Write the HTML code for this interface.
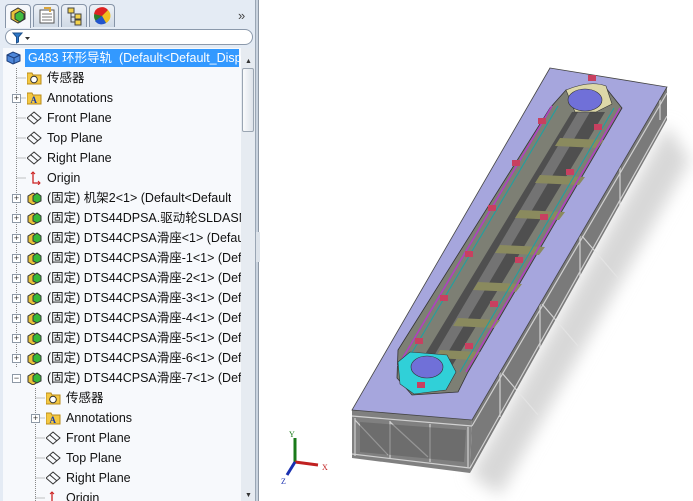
<!DOCTYPE html>
<html><head><meta charset="utf-8"><style>
*{margin:0;padding:0;box-sizing:border-box}
body{width:693px;height:501px;overflow:hidden;background:#fff;font-family:"Liberation Sans","Noto Sans CJK SC",sans-serif;position:relative}
#panel{position:absolute;left:0;top:0;width:256px;height:501px;background:#e4ebf4;border-right:1px solid #9aa6b4}
#sep{position:absolute;left:256px;top:0;width:3px;height:501px;background:#c9d3df;border-right:1px solid #8d98a6}
.tab{position:absolute;top:4px;width:26px;height:23px;border:1px solid #8795a8;border-bottom:none;border-radius:4px 4px 0 0;background:linear-gradient(#eef2f7,#cfd9e5)}
#filter{position:absolute;left:5px;top:29px;width:248px;height:16px;border:1px solid #8b99ab;border-radius:8px;background:#fff}
#tree{position:absolute;left:3px;top:48px;width:238px;height:453px;background:#f7f9fc}
#sb{position:absolute;left:241px;top:48px;width:14px;height:453px;background:#e6ebf1}
.r{position:absolute;height:20px;line-height:20px;font-size:12.5px;color:#111;white-space:nowrap;overflow:hidden}
.pm{position:absolute;width:9px;height:9px;border:1px solid #8e99a6;background:#fff;font-size:9px;line-height:7px;text-align:center;color:#333}
.ic{position:absolute;width:15px;height:14px}
</style></head><body>
<div id="panel">
<div class="tab" style="left:5px;background:#f6f8fb;height:24px"></div>
<div class="tab" style="left:33px"></div>
<div class="tab" style="left:61px"></div>
<div class="tab" style="left:89px"></div>
<svg style="position:absolute;left:0;top:0" width="256" height="30">
<path d="M11 12l7-4 7 4v7l-7 4-7-4z" fill="#e8c23a" stroke="#333"/><path d="M15 14l5-3 4 3v5l-4 3-5-3z" fill="#3fbb3f" stroke="#333"/>
<rect x="40" y="10" width="14" height="13" fill="#fff" stroke="#555"/><path d="M42 14h10M42 17h10M42 20h10" stroke="#777"/><path d="M44 8l6 0 0 4" stroke="#d9a53a" fill="none" stroke-width="2"/>
<rect x="68" y="8" width="6" height="5" fill="#f3d24a" stroke="#444"/><rect x="75" y="14" width="6" height="5" fill="#f3d24a" stroke="#444"/><rect x="75" y="20" width="6" height="5" fill="#f3d24a" stroke="#444"/><path d="M71 13v9h4M71 17h4" stroke="#444" fill="none"/>
<circle cx="102" cy="16" r="8" fill="#2a7d2a"/><path d="M102 16L94 14A8 8 0 0 1 108 10z" fill="#d22"/><path d="M102 16L108 10A8 8 0 0 1 106 23z" fill="#f0c020"/><path d="M102 16L106 23A8 8 0 0 1 95 21z" fill="#2255cc"/>
<text x="238" y="20" font-size="13" fill="#444" font-family="Liberation Sans">»</text>
</svg>
<div id="filter"><svg width="30" height="16"><path d="M7 3h9l-3.5 4v5l-2 1v-6z" fill="#2e78c8" stroke="#1b4f8c"/><path d="M19 7h5l-2.5 3z" fill="#333"/></svg></div>
<div id="tree"></div>
<div id="sb">
<div style="position:absolute;left:1px;top:20px;width:12px;height:64px;background:linear-gradient(90deg,#fafbfc,#dde3ea);border:1px solid #9aa5b2;border-radius:2px"></div>
<div style="position:absolute;left:4px;top:10px;font-size:7px;color:#333">▲</div>
<div style="position:absolute;left:4px;top:444px;font-size:7px;color:#333">▼</div>
</div>
</div>
<div id="sep"><div style="position:absolute;left:0;top:232px;width:4px;height:30px;background:#dde3ea"></div></div>

<div style="position:absolute;left:3px;top:48px;width:238px;height:453px;overflow:hidden">
<svg style="position:absolute;left:0;top:0" width="238" height="453">
<g stroke="#888" stroke-dasharray="1,1" fill="none">
<path d="M13.5 20v300M13.5 30h10M13.5 50h10M13.5 70h10M13.5 90h10M13.5 110h10M13.5 130h10"/>
<path d="M32.5 340v120M32.5 350h10M32.5 370h10M32.5 390h10M32.5 410h10M32.5 430h10M32.5 450h10"/>
</g>
</svg>
<div style="position:absolute;left:22px;top:1px;width:214px;height:18px;background:#3399ff"></div>
<div class="r" style="left:25px;top:0;color:#fff">G483 环形导轨&nbsp; (Default&lt;Default_Disp</div>
<svg class="ic" style="left:3px;top:3px" viewBox="0 0 15 14"><path d="M1 4l6-3 7 3v6l-7 3-6-3z" fill="#4d86d8" stroke="#1b3d7a"/><path d="M1 4l7 3 6-3M8 7v6" stroke="#1b3d7a" fill="none"/></svg>
</div>

<div id="rows" style="position:absolute;left:3px;top:48px;width:238px;height:453px;overflow:hidden">
<svg class="ic" style="left:24px;top:23px" viewBox="0 0 15 14"><path d="M0 2h5l1 2h8v9H0z" fill="#f4c842" stroke="#b88a1a"/><circle cx="7" cy="8.5" r="3.3" fill="#fff" stroke="#333"/></svg>
<div class="r" style="left:44px;top:20px">传感器</div>
<div class="pm" style="left:9px;top:46px">+</div>
<svg class="ic" style="left:24px;top:43px" viewBox="0 0 15 14"><path d="M0 2h5l1 2h8v9H0z" fill="#f4c842" stroke="#b88a1a"/><text x="3.5" y="12" font-size="9" font-weight="bold" fill="#1a3ea8" font-family="Liberation Serif">A</text></svg>
<div class="r" style="left:44px;top:40px">Annotations</div>
<svg class="ic" style="left:24px;top:63px" viewBox="0 0 15 14"><path d="M7 1l7 6-7 6-7-6z M4 4l7 6" fill="none" stroke="#333"/></svg>
<div class="r" style="left:44px;top:60px">Front Plane</div>
<svg class="ic" style="left:24px;top:83px" viewBox="0 0 15 14"><path d="M7 1l7 6-7 6-7-6z M4 4l7 6" fill="none" stroke="#333"/></svg>
<div class="r" style="left:44px;top:80px">Top Plane</div>
<svg class="ic" style="left:24px;top:103px" viewBox="0 0 15 14"><path d="M7 1l7 6-7 6-7-6z M4 4l7 6" fill="none" stroke="#333"/></svg>
<div class="r" style="left:44px;top:100px">Right Plane</div>
<svg class="ic" style="left:24px;top:123px" viewBox="0 0 15 14"><path d="M6 1v11h7" fill="none" stroke="#c22" stroke-width="1.3"/><path d="M4 3l2-2 2 2M11 10l2 2-2 2" fill="none" stroke="#c22"/></svg>
<div class="r" style="left:44px;top:120px">Origin</div>
</div>

<div id="comps" style="position:absolute;left:3px;top:48px;width:238px;height:453px;overflow:hidden"></div>
<script>
var names=["(固定) 机架2&lt;1&gt; (Default&lt;Default","(固定) DTS44DPSA.驱动轮SLDASM","(固定) DTS44CPSA滑座&lt;1&gt; (Defau","(固定) DTS44CPSA滑座-1&lt;1&gt; (Def","(固定) DTS44CPSA滑座-2&lt;1&gt; (Def","(固定) DTS44CPSA滑座-3&lt;1&gt; (Def","(固定) DTS44CPSA滑座-4&lt;1&gt; (Def","(固定) DTS44CPSA滑座-5&lt;1&gt; (Def","(固定) DTS44CPSA滑座-6&lt;1&gt; (Def","(固定) DTS44CPSA滑座-7&lt;1&gt; (Def"];
var h="";
names.forEach(function(n,i){var t=140+i*20;
h+='<div class="pm" style="left:9px;top:'+(t+6)+'px">'+(i==9?'−':'+')+'</div>';
h+='<svg class="ic" style="left:24px;top:'+(t+3)+'px" viewBox="0 0 15 14"><path d="M1 5l5-3 5 3v6l-5 3-5-3z" fill="#e8c23a" stroke="#333"/><path d="M6 5l4-3 4 3v5l-4 2-4-2z" fill="#37b837" stroke="#333"/></svg>';
h+='<div class="r" style="left:44px;top:'+t+'px">'+n+'</div>';});
var sub=[["s","传感器"],["a","Annotations"],["p","Front Plane"],["p","Top Plane"],["p","Right Plane"],["o","Origin"]];
sub.forEach(function(s,i){var t=340+i*20,ic;
if(s[0]=="s")ic='<path d="M0 2h5l1 2h8v9H0z" fill="#f4c842" stroke="#b88a1a"/><circle cx="7" cy="8.5" r="3.3" fill="#fff" stroke="#333"/>';
else if(s[0]=="a"){ic='<path d="M0 2h5l1 2h8v9H0z" fill="#f4c842" stroke="#b88a1a"/><text x="3.5" y="12" font-size="9" font-weight="bold" fill="#1a3ea8" font-family="Liberation Serif">A</text>';h+='<div class="pm" style="left:28px;top:'+(t+6)+'px">+</div>';}
else if(s[0]=="p")ic='<path d="M7 1l7 6-7 6-7-6z M4 4l7 6" fill="none" stroke="#333"/>';
else ic='<path d="M6 1v11h7" fill="none" stroke="#c22" stroke-width="1.3"/><path d="M4 3l2-2 2 2" fill="none" stroke="#c22"/>';
h+='<svg class="ic" style="left:43px;top:'+(t+3)+'px" viewBox="0 0 15 14">'+ic+'</svg><div class="r" style="left:63px;top:'+t+'px">'+s[1]+'</div>';});
document.getElementById("comps").innerHTML=h;
</script>

<svg style="position:absolute;left:260px;top:0" width="433" height="501" viewBox="260 0 433 501">
<defs>
<linearGradient id="sh" x1="0" x2="1" y1="0" y2="0"><stop offset="0" stop-color="#d0d0d0"/><stop offset="1" stop-color="#fff"/></linearGradient>
<filter id="bl"><feGaussianBlur stdDeviation="8"/></filter>
</defs>
<polygon points="470,475 667,125 690,160 500,495" fill="#d8d8d8" filter="url(#bl)"/>
<!-- side frame -->
<polygon points="472,420 667,87 667,120 470,473" fill="#7a7a7a"/>
<polygon points="352,410 472,420 470,473 352,458" fill="#808080"/>
<g stroke="#e6e6e6" stroke-width="1.2" fill="none" opacity="0.8">
<path d="M472,426 667,93 M470,468 667,116 M352,416 472,426 M352,454 470,468"/>
<path d="M355,418v38M390,421v37M430,424v38M468,427v40M500,372v45M540,303v45M580,235v45M620,167v45M660,100v20"/>
<path d="M355,420l33,35M390,422l38,35M502,373l36,42M542,304l36,42M582,236l36,42"/>
</g>
<polygon points="360,422 466,430 464,462 360,452" fill="#5a5a5a" opacity="0.5"/>
<!-- top plate -->
<polygon points="550,68 667,87 472,420 352,410" fill="#a6a6dd" stroke="#444" stroke-width="0.8"/>
<!-- track -->
<polygon points="566,90 606,88 622,108 468,372 458,392 412,395 397,378 398,350 550,108" fill="#7d7f74" stroke="#333" stroke-width="0.8"/>
<polygon points="572,112 605,112 452,366 418,366" fill="#4f4f4f"/>
<polygon points="578,112 590,112 440,366 428,366" fill="#8c8c8c" opacity="0.6"/>
<g fill="#8a8a5e">
<polygon points="560,138 604,140 598,148 555,146"/><polygon points="540,175 585,177 579,185 535,183"/><polygon points="520,210 565,212 559,220 515,218"/><polygon points="500,245 545,247 539,255 495,253"/><polygon points="478,282 522,284 516,292 473,290"/><polygon points="458,318 500,320 494,328 453,326"/><polygon points="440,350 480,352 474,360 435,358"/></g>
<path d="M552,106 398,366M620,108 466,372" stroke="#b040c0" stroke-width="1.6" fill="none"/>
<path d="M558,106 404,366M614,108 460,372" stroke="#20a0a0" stroke-width="1.1" fill="none"/>
<!-- top end -->
<path d="M566,90 Q590,80 606,86 L612,104 L596,112 L575,112z" fill="#ddd8a8" stroke="#333" stroke-width="0.6"/>
<ellipse cx="585" cy="100" rx="17" ry="11" fill="#7070d8" stroke="#333" stroke-width="0.6"/>
<!-- bottom end -->
<path d="M398,362 L410,352 L447,355 L456,372 L446,390 L414,394 L400,384z" fill="#30d0d8" stroke="#333" stroke-width="0.6"/>
<ellipse cx="427" cy="367" rx="16" ry="11" fill="#7070d8" stroke="#333" stroke-width="0.6"/>
<g fill="#c84060">
<rect x="588" y="75" width="8" height="6"/><rect x="538" y="118" width="8" height="6"/><rect x="594" y="124" width="8" height="6"/><rect x="512" y="160" width="8" height="6"/><rect x="566" y="169" width="8" height="6"/><rect x="488" y="205" width="8" height="6"/><rect x="540" y="214" width="8" height="6"/><rect x="465" y="251" width="8" height="6"/><rect x="515" y="257" width="8" height="6"/><rect x="440" y="295" width="8" height="6"/><rect x="490" y="301" width="8" height="6"/><rect x="415" y="338" width="8" height="6"/><rect x="465" y="343" width="8" height="6"/><rect x="417" y="382" width="8" height="6"/>
</g>
<path d="M295,462 L295,438" stroke="#1a7a1a" stroke-width="3"/><path d="M295,462 L318,465" stroke="#c02020" stroke-width="3"/><path d="M295,462 L287,475" stroke="#1a30b0" stroke-width="3"/>
<text x="289" y="437" font-size="8" fill="#1a7a1a" font-family="Liberation Serif">Y</text>
<text x="322" y="470" font-size="8" fill="#c02020" font-family="Liberation Serif">X</text>
<text x="281" y="484" font-size="8" fill="#1a30b0" font-family="Liberation Serif">Z</text>
</svg>
</body></html>
